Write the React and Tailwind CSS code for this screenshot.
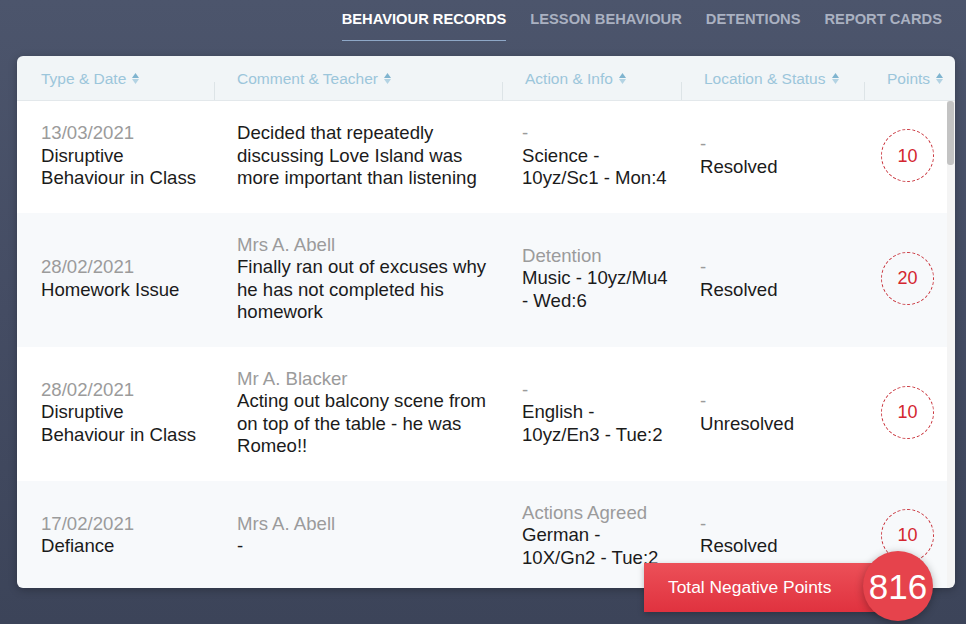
import React from "react";

const font = { fontFamily: '"Liberation Sans", Arial, Helvetica, sans-serif' };

function SortIcon() {
  return (
    <span className="ml-[6px] inline-flex flex-col items-center gap-[1px] align-middle">
      <svg width="7" height="5" viewBox="0 0 7 5"><path d="M3.5 0 L7 5 L0 5 Z" fill="#7fb4cf" /></svg>
      <svg width="7" height="5" viewBox="0 0 7 5"><path d="M0 0 L7 0 L3.5 5 Z" fill="#b3d3e3" /></svg>
    </span>
  );
}

const rows = [
  {
    bg: "bg-white",
    c1: [["13/03/2021", "g"], ["Disruptive"], ["Behaviour in Class"]],
    c2: [["Decided that repeatedly"], ["discussing Love Island was"], ["more important than listening"]],
    c3: [["-", "g"], ["Science -"], ["10yz/Sc1 - Mon:4"]],
    c4: [["-", "g"], ["Resolved"]],
    pts: "10",
  },
  {
    bg: "bg-[#f7f9fb]",
    c1: [["28/02/2021", "g"], ["Homework Issue"]],
    c2: [["Mrs A. Abell", "g"], ["Finally ran out of excuses why"], ["he has not completed his"], ["homework"]],
    c3: [["Detention", "g"], ["Music - 10yz/Mu4"], ["- Wed:6"]],
    c4: [["-", "g"], ["Resolved"]],
    pts: "20",
  },
  {
    bg: "bg-white",
    c1: [["28/02/2021", "g"], ["Disruptive"], ["Behaviour in Class"]],
    c2: [["Mr A. Blacker", "g"], ["Acting out balcony scene from"], ["on top of the table - he was"], ["Romeo!!"]],
    c3: [["-", "g"], ["English -"], ["10yz/En3 - Tue:2"]],
    c4: [["-", "g"], ["Unresolved"]],
    pts: "10",
  },
  {
    bg: "bg-[#f7f9fb]",
    c1: [["17/02/2021", "g"], ["Defiance"]],
    c2: [["Mrs A. Abell", "g"], ["-"]],
    c3: [["Actions Agreed", "g"], ["German -"], ["10X/Gn2 - Tue:2"]],
    c4: [["-", "g"], ["Resolved"]],
    pts: "10",
  },
];

function Lines({ lines, className }) {
  return (
    <div className={className}>
      {lines.map(([t, g], i) => (
        <div key={i} className={"whitespace-nowrap " + (g ? "text-[#9b9b9b]" : "text-[#1b1b1b]")}>
          {t}
        </div>
      ))}
    </div>
  );
}

function HeaderCell({ label, divider, pad }) {
  return (
    <div className={"relative flex items-center " + pad}>
      {divider && <span className="absolute left-0 bottom-0 h-[18px] w-px bg-[#dde4e7]" />}
      <span className="whitespace-nowrap text-[15.5px] text-[#9cc6db]">{label}</span>
      <SortIcon />
    </div>
  );
}

export default function App() {
  return (
    <div
      className="relative h-[624px] w-full overflow-hidden bg-[linear-gradient(180deg,#4c556c_0%,#444c63_50%,#3c4459_100%)]"
      style={font}
    >
      {/* Tabs */}
      <div className="flex h-[41px] justify-end gap-[24px] pr-[24px]">
        <div className="h-[41px] border-b border-[#8ea7c7] pt-[11px] text-[14.7px] font-bold leading-[17px] text-white">
          BEHAVIOUR RECORDS
        </div>
        <div className="h-[41px] pt-[11px] text-[14.7px] font-bold leading-[17px] text-[#aab1c1]">
          LESSON BEHAVIOUR
        </div>
        <div className="h-[41px] pt-[11px] text-[14.7px] font-bold leading-[17px] text-[#aab1c1]">
          DETENTIONS
        </div>
        <div className="h-[41px] pt-[11px] text-[14.7px] font-bold leading-[17px] text-[#aab1c1]">
          REPORT CARDS
        </div>
      </div>

      {/* Card */}
      <div className="ml-[17px] mt-[15px] flex h-[532px] w-[938px] flex-col overflow-hidden rounded-[6px] shadow-[0_2px_8px_rgba(0,0,0,0.25)]">
        <div className="grid h-[45px] shrink-0 grid-cols-[197px_288px_179px_183px_1fr] border-b border-[#e3e8eb] bg-[#f1f5f7] pt-[1px]">
          <HeaderCell label="Type & Date" pad="pl-[24px]" />
          <HeaderCell label="Comment & Teacher" pad="pl-[23px]" divider />
          <HeaderCell label="Action & Info" pad="pl-[23px]" divider />
          <HeaderCell label="Location & Status" pad="pl-[23px]" divider />
          <HeaderCell label="Points" pad="pl-[23px]" divider />
        </div>
        <div className="flex min-h-0 flex-1">
          <div className="min-w-0 flex-1 overflow-hidden">
            {rows.map((r, i) => (
              <div
                key={i}
                className={"grid grid-cols-[197px_288px_179px_183px_1fr] items-center pt-[21px] pb-[23px] text-[18.6px] leading-[22.5px] " + r.bg}
              >
                <Lines lines={r.c1} className="pl-[24px]" />
                <Lines lines={r.c2} className="pl-[23px]" />
                <Lines lines={r.c3} className="pl-[20px]" />
                <Lines lines={r.c4} className="pl-[19px]" />
                <div className="flex justify-center pl-[4px]">
                  <div className="flex h-[53px] w-[53px] items-center justify-center rounded-full border border-dashed border-[#c9343c] text-[18px] text-[#d4262f]">
                    {r.pts}
                  </div>
                </div>
              </div>
            ))}
          </div>
          <div className="w-[8px] shrink-0 bg-[#f4f4f4]">
            <div className="h-[64px] w-[7px] rounded-[3px] bg-[#c3c3c3]" />
          </div>
        </div>
      </div>

      {/* Total banner */}
      <div className="absolute left-[644px] top-[563px] flex h-[49px] w-[250px] items-center bg-[linear-gradient(180deg,#ec5058_0%,#e0323f_100%)] pl-[24px] shadow-[0_2px_6px_rgba(0,0,0,0.25)]">
        <span className="text-[17.4px] text-white">Total Negative Points</span>
      </div>
      <div className="absolute left-[863px] top-[551px] flex h-[70px] w-[70px] items-center justify-center rounded-full bg-[#e6434c] shadow-[0_2px_8px_rgba(0,0,0,0.3)]">
        <span className="text-[35px] font-light leading-none text-white">816</span>
      </div>
    </div>
  );
}
